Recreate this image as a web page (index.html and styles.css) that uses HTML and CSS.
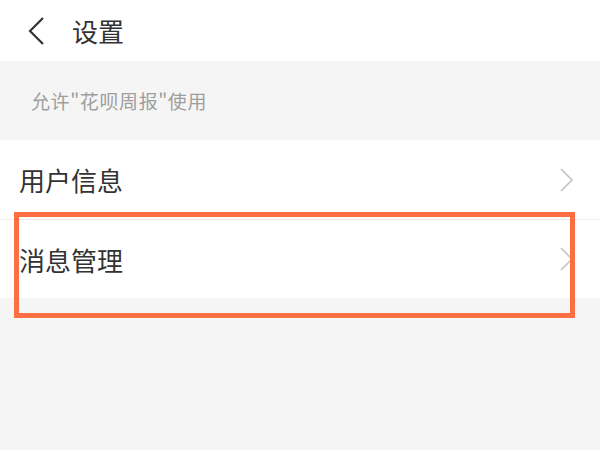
FILE: index.html
```html
<!DOCTYPE html>
<html lang="zh-CN">
<head>
    <meta charset="UTF-8">
    <meta name="viewport" content="width=device-width, initial-scale=1.0">
    <title>设置</title>
    <link rel="stylesheet" href="styles.css">
</head>
<body>

    <!-- Header -->
    <div class="header">
        <svg class="back-icon" width="18" height="28" viewBox="0 0 18 28">
            <path d="M16 1 L3 14 L16 27" fill="none" stroke="#333" stroke-width="2.2"/>
        </svg>
        <h1 class="title">设置</h1>
    </div>

    <!-- Section tip -->
    <div class="section-tip">允许"花呗周报"使用</div>

    <!-- List -->
    <div class="list">
        <div class="list-item">
            <span class="item-text">用户信息</span>
            <svg class="arrow" width="14" height="24" viewBox="0 0 14 24">
                <path d="M1 1 L12 12 L1 23" fill="none" stroke="#c4c4c4" stroke-width="1.6"/>
            </svg>
        </div>
        <div class="list-item">
            <span class="item-text">消息管理</span>
            <svg class="arrow" width="14" height="24" viewBox="0 0 14 24">
                <path d="M1 1 L12 12 L1 23" fill="none" stroke="#c4c4c4" stroke-width="1.6"/>
            </svg>
            <div class="highlight"></div>
        </div>
    </div>

</body>
</html>
```

FILE: styles.css
```css
/* Reset styles */
* {
    margin: 0;
    padding: 0;
    box-sizing: border-box;
}

body {
    font-family: "Noto Sans CJK SC", "Noto Sans", sans-serif;
    background-color: #f5f5f5;
    width: 600px;
    height: 450px;
    overflow: hidden;
}

/* Header */
.header {
    height: 61px;
    background-color: #fff;
    display: flex;
    align-items: center;
    padding-left: 27px;
}

.back-icon {
    display: block;
}

.title {
    font-size: 26px;
    font-weight: normal;
    color: #333;
    margin-left: 27px;
    line-height: 1;
}

/* Tip text */
.section-tip {
    height: 79px;
    display: flex;
    align-items: center;
    padding-left: 31px;
    font-size: 19px;
    letter-spacing: 0.6px;
    color: #9e9e9e;
}

/* List */
.list {
    background-color: #fff;
}

.list-item {
    position: relative;
    height: 79px;
    display: flex;
    align-items: center;
    justify-content: space-between;
    padding: 0 26px 0 19px;
}

.list-item + .list-item {
    border-top: 1px solid #ededed;
}

.item-text {
    font-size: 26px;
    color: #333;
}

.arrow {
    display: block;
}

/* Orange highlight frame */
.highlight {
    position: absolute;
    left: 14px;
    top: -8px;
    width: 561px;
    height: 106px;
    border: 5px solid #fc6f42;
}
```
